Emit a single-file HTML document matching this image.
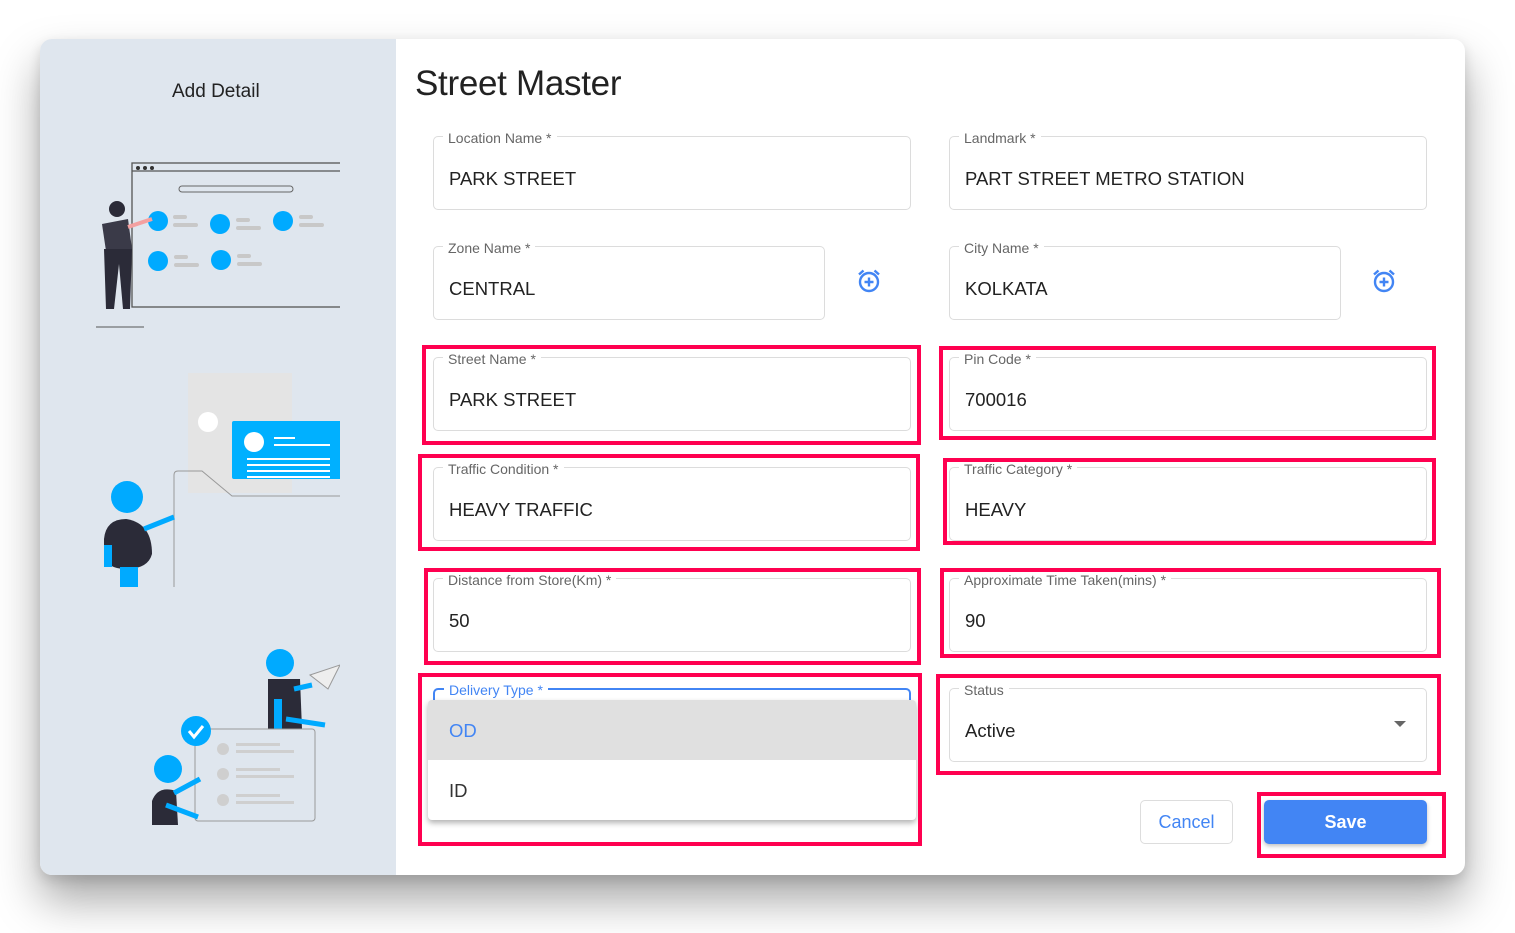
<!DOCTYPE html>
<html><head><meta charset="utf-8"><style>
*{box-sizing:border-box;margin:0;padding:0}
body{width:1515px;height:933px;background:#fff;position:relative;overflow:hidden;font-family:"Liberation Sans",Roboto,sans-serif}
.card{position:absolute;left:40px;top:39px;width:1425px;height:836px;background:#fff;border-radius:12px;box-shadow:0 25px 45px rgba(0,0,0,.35),0 5px 12px rgba(0,0,0,.12);overflow:hidden}
.left{position:absolute;left:0;top:0;width:356px;height:836px;background:#dfe6ee}
.abs{position:absolute}
.f{position:absolute;height:74px;border:1px solid #dcdcdc;border-radius:5px}
.f .l{position:absolute;top:-7px;left:9px;background:#fff;padding:0 5px;font-size:14px;color:#666;line-height:16px;white-space:nowrap}
.f .v{position:absolute;left:15px;top:31px;font-size:18.5px;color:#222;line-height:22px;white-space:nowrap}
.r{position:absolute;border:4px solid #ff0050}
.ic{position:absolute;width:28px;height:28px}
</style></head><body>
<div class="card">
<div class="left">
<div class="abs" style="left:132px;top:42px;font-size:19px;color:#222">Add Detail</div>
<svg class="abs" style="left:0;top:0" width="300" height="836" viewBox="0 0 300 836">
<rect x="92" y="124" width="230" height="144" fill="none" stroke="#555" stroke-width="1.3"/>
<line x1="92" y1="132" x2="322" y2="132" stroke="#555" stroke-width="1.2"/>
<circle cx="98" cy="129" r="2" fill="#333"/><circle cx="105" cy="129" r="2" fill="#333"/><circle cx="112" cy="129" r="2" fill="#333"/>
<rect x="139" y="147" width="114" height="6" rx="3" fill="none" stroke="#666"/>
<g fill="#00aaff"><circle cx="118" cy="182" r="10"/><circle cx="180" cy="185" r="10"/><circle cx="243" cy="182" r="10"/><circle cx="118" cy="222" r="10"/><circle cx="181" cy="221" r="10"/></g>
<g fill="#c8c8c8"><rect x="133" y="176" width="14" height="4" rx="2"/><rect x="133" y="184" width="25" height="4" rx="2"/><rect x="196" y="179" width="14" height="4" rx="2"/><rect x="196" y="187" width="25" height="4" rx="2"/><rect x="259" y="176" width="14" height="4" rx="2"/><rect x="259" y="184" width="25" height="4" rx="2"/><rect x="134" y="216" width="14" height="4" rx="2"/><rect x="134" y="224" width="25" height="4" rx="2"/><rect x="197" y="215" width="14" height="4" rx="2"/><rect x="197" y="223" width="25" height="4" rx="2"/></g>
<path d="M62 185 L88 180 L92 210 L66 212 Z" fill="#3a3a48"/>
<circle cx="77" cy="170" r="8" fill="#2b2b38"/>
<path d="M88 188 L112 180" stroke="#f4a0a0" stroke-width="4"/>
<path d="M64 210 L92 210 L90 270 L83 270 L79 225 L74 270 L66 270 Z" fill="#2b2b38"/>
<line x1="56" y1="288" x2="104" y2="288" stroke="#555"/>
<rect x="148" y="334" width="104" height="120" fill="#e4e4e4"/>
<circle cx="168" cy="383" r="10" fill="#fff"/>
<rect x="192" y="382" width="130" height="58" rx="2" fill="#00b0ff"/>
<circle cx="214" cy="403" r="10" fill="#fff"/>
<g stroke="#fff" stroke-width="2"><line x1="234" y1="399" x2="255" y2="399"/><line x1="234" y1="406" x2="290" y2="406"/><line x1="207" y1="420" x2="290" y2="420"/><line x1="207" y1="426" x2="290" y2="426"/><line x1="207" y1="432" x2="290" y2="432"/><line x1="207" y1="438" x2="290" y2="438"/></g>
<path d="M134 548 L134 436 Q134 432 138 432 L162 432 L192 457 L300 457" fill="none" stroke="#999" stroke-width="1"/>
<circle cx="87" cy="458" r="16" fill="#00aaff"/>
<path d="M64 500 Q66 480 86 480 Q112 484 112 515 Q108 530 86 530 Q66 530 64 515Z" fill="#2b2b38"/>
<path d="M104 490 L134 478" stroke="#00aaff" stroke-width="5"/>
<rect x="64" y="506" width="8" height="22" fill="#00aaff"/>
<rect x="80" y="528" width="18" height="20" fill="#00aaff"/>
<circle cx="240" cy="624" r="14" fill="#00aaff"/>
<path d="M270 636 L300 626 L288 650 Z" fill="#eee" stroke="#999"/>
<path d="M228 640 L260 640 L262 690 L228 690Z" fill="#2b2b38"/>
<rect x="234" y="660" width="8" height="30" fill="#00aaff"/>
<path d="M246 680 L285 686" stroke="#00aaff" stroke-width="5"/>
<path d="M254 650 L272 646" stroke="#00aaff" stroke-width="5"/>
<rect x="155" y="690" width="120" height="92" rx="3" fill="none" stroke="#999"/>
<circle cx="156" cy="692" r="15" fill="#00aaff"/>
<path d="M149 692 L154 698 L163 687" stroke="#fff" stroke-width="3" fill="none"/>
<g fill="#cfcfcf"><circle cx="183" cy="710" r="6"/><circle cx="183" cy="735" r="6"/><circle cx="183" cy="761" r="6"/><rect x="196" y="704" width="44" height="3"/><rect x="196" y="711" width="58" height="3"/><rect x="196" y="729" width="44" height="3"/><rect x="196" y="736" width="58" height="3"/><rect x="196" y="755" width="44" height="3"/><rect x="196" y="762" width="58" height="3"/></g>
<circle cx="128" cy="730" r="14" fill="#00aaff"/>
<path d="M112 786 L112 762 Q118 746 136 752 L138 786Z" fill="#2b2b38"/>
<path d="M134 754 L160 740 M126 766 L158 778" stroke="#00aaff" stroke-width="5"/>
</svg>
</div>
<div class="abs" style="left:375px;top:25px;font-size:35px;color:#222;letter-spacing:-0.3px">Street Master</div>
</div>

<div class="f" style="left:433px;top:136px;width:478px"><span class="l">Location Name *</span><span class="v">PARK STREET</span></div>
<div class="f" style="left:949px;top:136px;width:478px"><span class="l">Landmark *</span><span class="v">PART STREET METRO STATION</span></div>
<div class="f" style="left:433px;top:246px;width:392px"><span class="l">Zone Name *</span><span class="v">CENTRAL</span></div>
<div class="f" style="left:949px;top:246px;width:392px"><span class="l">City Name *</span><span class="v">KOLKATA</span></div>
<svg class="ic" style="left:855px;top:267px" viewBox="0 0 28 28"><g fill="none" stroke="#4285f4" stroke-width="2.4"><circle cx="14" cy="15" r="9"/><path d="M14 10.5v9M9.5 15h9"/><path d="M4 7.5 L8.5 3.5M24 7.5 L19.5 3.5"/></g></svg>
<svg class="ic" style="left:1370px;top:267px" viewBox="0 0 28 28"><g fill="none" stroke="#4285f4" stroke-width="2.4"><circle cx="14" cy="15" r="9"/><path d="M14 10.5v9M9.5 15h9"/><path d="M4 7.5 L8.5 3.5M24 7.5 L19.5 3.5"/></g></svg>
<div class="f" style="left:433px;top:357px;width:478px"><span class="l">Street Name *</span><span class="v">PARK STREET</span></div>
<div class="f" style="left:949px;top:357px;width:478px"><span class="l">Pin Code *</span><span class="v">700016</span></div>
<div class="f" style="left:433px;top:467px;width:478px"><span class="l">Traffic Condition *</span><span class="v">HEAVY TRAFFIC</span></div>
<div class="f" style="left:949px;top:467px;width:478px"><span class="l">Traffic Category *</span><span class="v">HEAVY</span></div>
<div class="f" style="left:433px;top:578px;width:478px"><span class="l">Distance from Store(Km) *</span><span class="v">50</span></div>
<div class="f" style="left:949px;top:578px;width:478px"><span class="l">Approximate Time Taken(mins) *</span><span class="v">90</span></div>
<div class="f" style="left:433px;top:688px;width:478px;border:2px solid #4285f4"><span class="l" style="color:#4285f4;top:-8px">Delivery Type *</span></div>
<div class="f" style="left:949px;top:688px;width:478px"><span class="l">Status</span><span class="v">Active</span>
<div class="abs" style="right:20px;top:32px;width:0;height:0;border-left:6px solid transparent;border-right:6px solid transparent;border-top:6px solid #666"></div></div>
<div class="abs" style="left:428px;top:700px;width:488px;height:120px;background:#fff;border-radius:4px;box-shadow:0 3px 6px rgba(0,0,0,.3);overflow:hidden">
<div style="height:60px;background:#e0e0e0;padding-left:21px;line-height:62px;font-size:18.5px;color:#4285f4">OD</div>
<div style="height:60px;padding-left:21px;line-height:62px;font-size:18.5px;color:#333">ID</div>
</div>
<div class="abs" style="left:1140px;top:800px;width:93px;height:44px;border:1px solid #ddd;border-radius:5px;text-align:center;line-height:42px;font-size:18px;color:#4285f4">Cancel</div>
<div class="abs" style="left:1264px;top:800px;width:163px;height:44px;background:#4285f4;border-radius:5px;text-align:center;line-height:44px;font-size:18px;color:#fff;font-weight:bold;box-shadow:0 2px 4px rgba(0,0,0,.25)">Save</div>

<div class="r" style="left:422px;top:345px;width:499px;height:100px"></div>
<div class="r" style="left:939px;top:346px;width:497px;height:94px"></div>
<div class="r" style="left:418px;top:454px;width:502px;height:97px"></div>
<div class="r" style="left:943px;top:458px;width:493px;height:87px"></div>
<div class="r" style="left:424px;top:568px;width:497px;height:97px"></div>
<div class="r" style="left:940px;top:568px;width:501px;height:90px"></div>
<div class="r" style="left:418px;top:673px;width:504px;height:173px"></div>
<div class="r" style="left:936px;top:674px;width:505px;height:101px"></div>
<div class="r" style="left:1257px;top:792px;width:189px;height:66px"></div>
</body></html>
